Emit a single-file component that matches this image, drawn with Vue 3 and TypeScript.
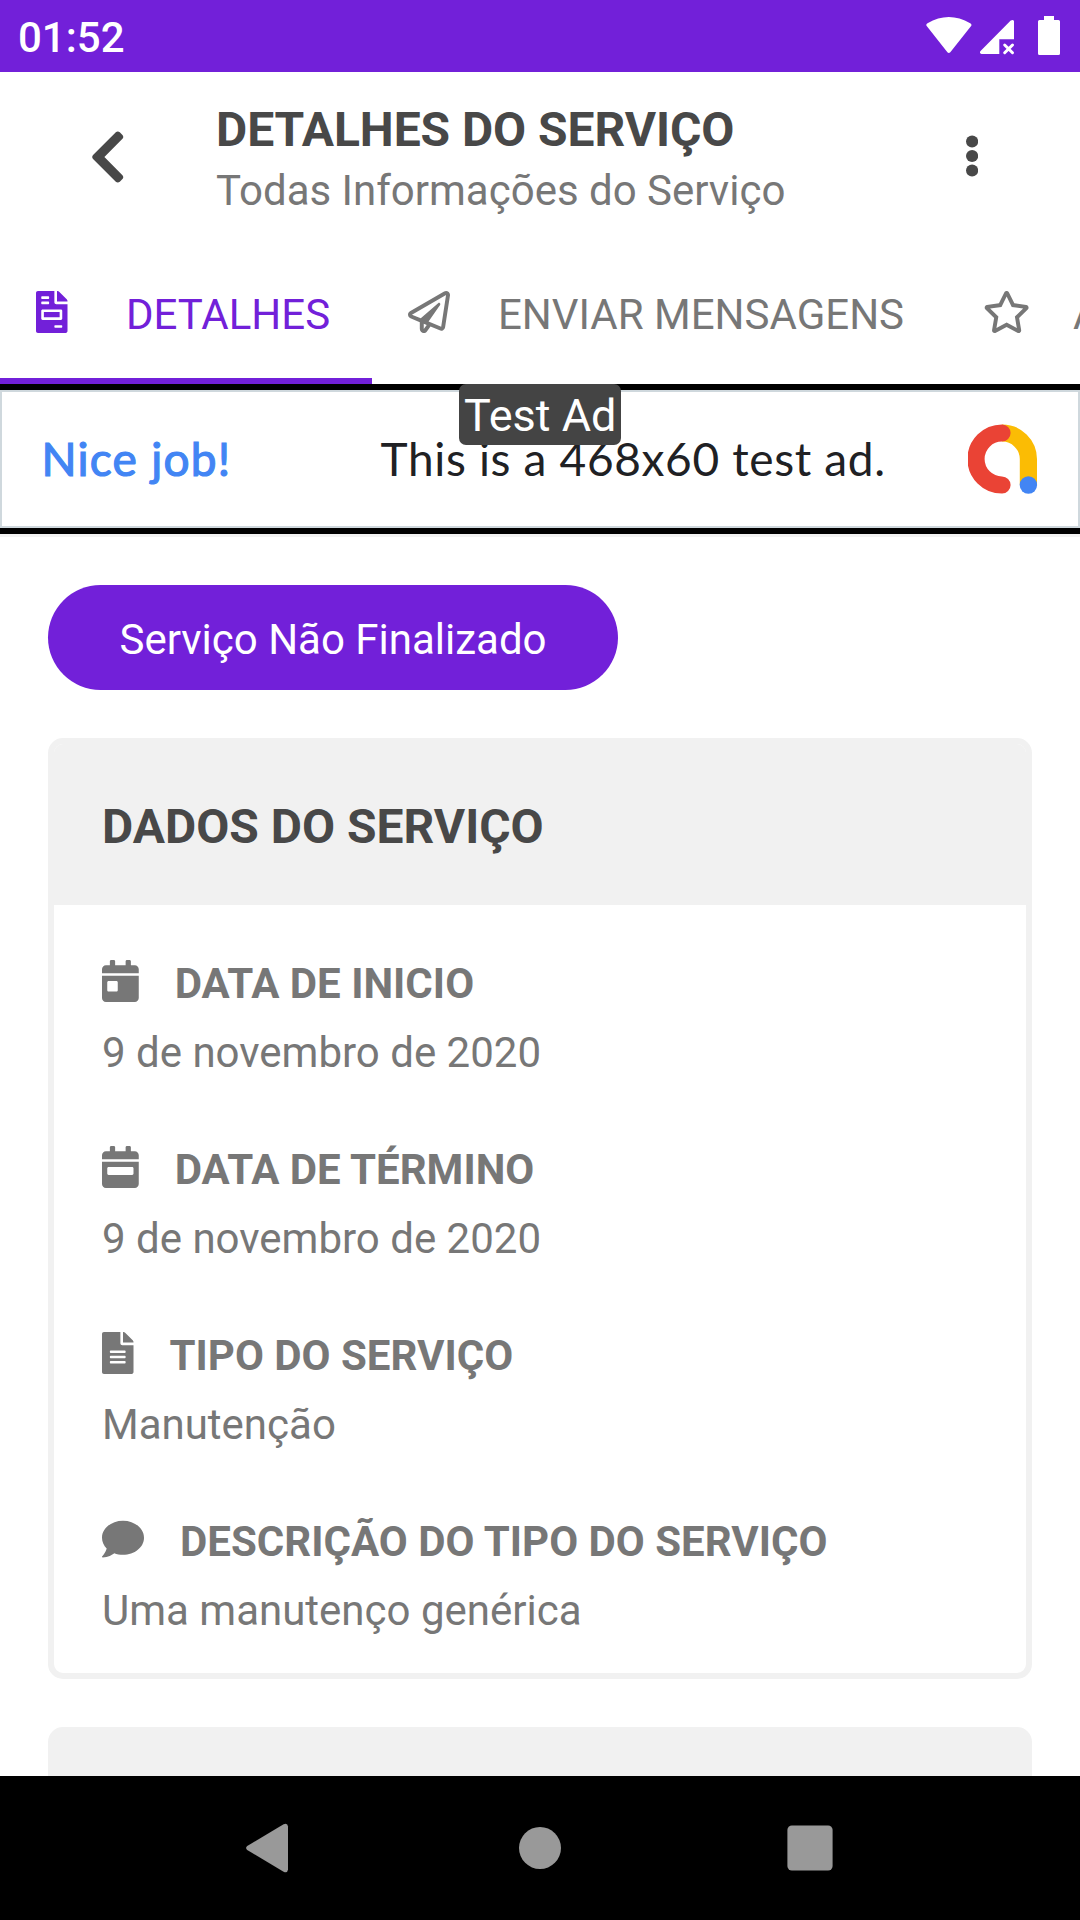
<script setup lang="ts">
interface Field {
  label: string
  value: string
  iconWidth: number
  path: string
}

const calendarTop =
  'M400 64h-48V16c0-8.800-7.200-16-16-16h-32c-8.800 0-16 7.200-16 16v48H160V16c0-8.800-7.200-16-16-16h-32c-8.800 0-16 7.200-16 16v48H48C21.500 64 0 85.500 0 112v48h448v-48c0-26.500-21.500-48-48-48z'

const fields: Field[] = [
  {
    label: 'DATA DE INICIO',
    value: '9 de novembro de 2020',
    iconWidth: 448,
    path:
      'M0 464c0 26.500 21.500 48 48 48h352c26.500 0 48-21.500 48-48V192H0v272zm64-192c0-8.800 7.200-16 16-16h96c8.800 0 16 7.200 16 16v96c0 8.800-7.200 16-16 16H80c-8.800 0-16-7.200-16-16v-96z' +
      calendarTop,
  },
  {
    label: 'DATA DE TÉRMINO',
    value: '9 de novembro de 2020',
    iconWidth: 448,
    path:
      'M0 464c0 26.500 21.500 48 48 48h352c26.500 0 48-21.500 48-48V192H0v272zm64-192c0-8.800 7.200-16 16-16h288c8.800 0 16 7.200 16 16v64c0 8.800-7.200 16-16 16H80c-8.800 0-16-7.200-16-16v-64z' +
      calendarTop,
  },
  {
    label: 'TIPO DO SERVIÇO',
    value: 'Manutenção',
    iconWidth: 384,
    path: 'M224 136V0H24C10.700 0 0 10.700 0 24v464c0 13.300 10.700 24 24 24h336c13.300 0 24-10.700 24-24V160H248c-13.200 0-24-10.800-24-24zm64 236c0 6.600-5.400 12-12 12H108c-6.600 0-12-5.400-12-12v-8c0-6.600 5.400-12 12-12h168c6.600 0 12 5.400 12 12v8zm0-64c0 6.600-5.400 12-12 12H108c-6.600 0-12-5.400-12-12v-8c0-6.600 5.400-12 12-12h168c6.600 0 12 5.400 12 12v8zm0-72v8c0 6.600-5.400 12-12 12H108c-6.600 0-12-5.400-12-12v-8c0-6.600 5.400-12 12-12h168c6.600 0 12 5.400 12 12zm96-114.100v6.100H256V0h6.100c6.400 0 12.500 2.500 17 7l97.900 98c4.500 4.500 7 10.600 7 16.900z',
  },
  {
    label: 'DESCRIÇÃO DO TIPO DO SERVIÇO',
    value: 'Uma manutenço genérica',
    iconWidth: 512,
    path: 'M256 32C114.600 32 0 125.100 0 240c0 49.600 21.400 95 57 130.700C44.500 421.100 2.700 466 2.200 466.500c-2.200 2.300-2.800 5.700-1.500 8.700S4.800 480 8 480c66.300 0 116-31.800 140.600-51.400 32.700 12.300 69 19.400 107.400 19.400 141.400 0 256-93.100 256-208S397.400 32 256 32z',
  },
]
</script>

<template>
  <div class="screen">
    <div class="status">
      <span class="clock">01:52</span>
      <svg class="status-icons" width="140" height="44" viewBox="924 14 140 44" fill="#fff">
        <path d="M927.100 26.600Q925.300 24.600 927.500 23.200Q948.800 10.800 970.200 23.200Q972.500 24.600 970.700 26.600L950.300 52.200Q948.800 53.800 947.400 52.200Z" />
        <path d="M1014 21.200V39.300H999.300V54H981.500Q979.200 53.200 980.300 51.200L1010.700 20.600Q1013.400 19.100 1014 21.200Z" />
        <path d="M1004.700 45L1012.500 52.700M1012.500 45L1004.700 52.700" stroke="#fff" stroke-width="3" stroke-linecap="round" />
        <path d="M1044 16h10v4h4.500q1.500 0 1.500 1.500v32q0 1.500-1.500 1.500h-19q-1.500 0-1.500-1.500v-32q0-1.500 1.500-1.500h4.500z" />
      </svg>
    </div>

    <header class="header">
      <svg class="back" width="37.500" height="60" viewBox="0 0 320 512" fill="currentColor">
        <path d="M34.520 239.030L228.870 44.690c9.370-9.370 24.570-9.370 33.940 0l22.670 22.670c9.360 9.360 9.370 24.520.04 33.900L131.490 256l154.020 154.750c9.340 9.380 9.320 24.540-.04 33.900l-22.670 22.670c-9.370 9.370-24.570 9.370-33.940 0L34.520 272.970c-9.370-9.370-9.370-24.570 0-33.940z" />
      </svg>
      <div class="titles">
        <h1>DETALHES DO SERVIÇO</h1>
        <p>Todas Informações do Serviço</p>
      </div>
      <svg class="more" width="12.200" height="42" viewBox="-.1 0 12.200 42" fill="currentColor">
        <circle cx="6" cy="6.500" r="6.100" />
        <circle cx="6" cy="21" r="6.100" />
        <circle cx="6" cy="35.500" r="6.100" />
      </svg>
    </header>

    <nav class="tabs">
      <div class="tab active">
        <span class="tab-icon">
          <svg width="31.500" height="42" viewBox="0 0 384 512" fill="currentColor">
            <path d="M288 256H96v64h192v-64zm89-151L279.100 7c-4.500-4.500-10.600-7-17-7H256v128h128v-6.100c0-6.300-2.500-12.400-7-16.900zm-153 31V0H24C10.700 0 0 10.700 0 24v464c0 13.300 10.700 24 24 24h336c13.300 0 24-10.700 24-24V160H248c-13.200 0-24-10.800-24-24zM64 72c0-4.420 3.580-8 8-8h80c4.420 0 8 3.580 8 8v16c0 4.420-3.580 8-8 8H72c-4.420 0-8-3.580-8-8V72zm0 64c0-4.420 3.580-8 8-8h80c4.420 0 8 3.580 8 8v16c0 4.420-3.580 8-8 8H72c-4.420 0-8-3.580-8-8v-16zm256 304c0 4.420-3.580 8-8 8h-80c-4.420 0-8-3.580-8-8v-16c0-4.420 3.580-8 8-8h80c4.420 0 8 3.580 8 8v16zm0-200v96c0 8.840-7.160 16-16 16H80c-8.840 0-16-7.160-16-16v-96c0-8.840 7.160-16 16-16h224c8.840 0 16 7.160 16 16z" />
          </svg>
        </span>
        <span>DETALHES</span>
      </div>
      <div class="tab messages">
        <span class="tab-icon">
          <svg width="42" height="42" viewBox="0 0 512 512" fill="currentColor">
            <path d="M440 6.500L24 246.400c-34.400 19.900-31.100 70.800 5.700 85.900L144 379.600V464c0 46.400 59.200 65.500 86.600 28.600l43.800-59.100 111.900 46.200c5.900 2.400 12.100 3.600 18.300 3.600 8.200 0 16.300-2.100 23.600-6.200 12.800-7.200 21.600-20 23.900-34.500l59.400-387.200c6.100-40.100-36.900-68.800-71.500-48.900zM192 464v-64.600l36.600 15.100L192 464zm212.600-28.700l-153.800-63.500L391 169.500c10.700-15.500-9.500-33.500-23.700-21.200L155.800 332.600 48 288 464 48l-59.400 387.300z" />
          </svg>
        </span>
        <span>ENVIAR MENSAGENS</span>
      </div>
      <div class="tab">
        <span class="tab-icon">
          <svg width="47.250" height="42" viewBox="0 0 576 512" fill="currentColor">
            <path d="M528.100 171.500L382 150.200 316.700 17.800c-11.700-23.600-45.600-23.900-57.400 0L194 150.200 47.900 171.500c-26.200 3.800-36.700 36.100-17.700 54.600l105.700 103-25 145.500c-4.500 26.300 23.200 46 46.400 33.700L288 439.600l130.700 68.700c23.200 12.200 50.900-7.400 46.400-33.700l-25-145.500 105.700-103c19-18.500 8.500-50.800-17.700-54.600zM388.600 312.300l23.700 138.400L288 385.400l-124.300 65.300 23.700-138.400-100.600-98 139-20.200 62.200-126 62.200 126 139 20.200-100.600 98z" />
          </svg>
        </span>
        <span>A</span>
      </div>
    </nav>

    <section class="ad">
      <div class="ad-box">
        <span class="ad-lead">Nice job!</span>
        <span class="ad-text">This is a 468x60 test ad.</span>
        <svg class="ad-logo" width="70" height="70" viewBox="967 424 70 70" fill="none" stroke-width="17.200">
          <path d="M1001 433A26.300 26.300 0 0 1 1027.400 459V485" stroke="#fbbc04" />
          <path d="M1001 433A26 26 0 0 0 1001 485" stroke="#ea4335" stroke-linecap="round" />
          <circle cx="1027.400" cy="485" r="8.700" fill="#4285f4" />
        </svg>
      </div>
      <span class="ad-badge">Test Ad</span>
    </section>

    <main class="content">
      <button class="pill">Serviço Não Finalizado</button>
      <section class="card">
        <h2>DADOS DO SERVIÇO</h2>
        <div class="card-body">
          <div v-for="f in fields" :key="f.label" class="field">
            <div class="label">
              <svg :width="(f.iconWidth * 42) / 512" height="42" :viewBox="`0 0 ${f.iconWidth} 512`" fill="currentColor">
                <path :d="f.path" />
              </svg>
              <span>{{ f.label }}</span>
            </div>
            <div class="value">{{ f.value }}</div>
          </div>
        </div>
      </section>
      <section class="card next"></section>
    </main>

    <footer class="navbar">
      <svg width="48" height="52" viewBox="243 1822 48 52" fill="#999">
        <path d="M247.200 1846L283.600 1824.300Q287.500 1822.600 288 1826.500V1869.500Q287.500 1873.400 283.600 1871.700L247.200 1850Q245 1848 247.200 1846Z" />
      </svg>
      <svg class="home" width="42" height="42" viewBox="0 0 42 42" fill="#999"><circle cx="21" cy="21" r="21" /></svg>
      <svg width="46" height="46" viewBox="0 0 46 46" fill="#999"><rect x=".4" y=".4" width="45.200" height="45.200" rx="4.500" /></svg>
    </footer>
  </div>
</template>

<style>
body {
  margin: 0;
  background: #fff;
}
</style>

<style scoped>
.screen {
  width: 1080px;
  height: 1920px;
  overflow: hidden;
  display: flex;
  flex-direction: column;
  background: #fff;
  color: #777;
  font-family: Roboto, "Liberation Sans", sans-serif;
  font-size: 42px;
  line-height: 50px;
  white-space: nowrap;
}
svg {
  display: block;
  flex: none;
}
.status {
  flex: none;
  box-sizing: border-box;
  height: 72px;
  padding: 0 16px 0 18px;
  display: flex;
  justify-content: space-between;
  background: #7220d9;
  color: #fff;
}
.clock {
  font-weight: 500;
  margin-top: 13px;
}
.status-icons {
  margin-top: 14px;
}
.header {
  flex: none;
  box-sizing: border-box;
  height: 184px;
  padding: 0 102px 0 89px;
  display: flex;
  align-items: flex-start;
  color: #484848;
}
.back {
  margin-top: 54.500px;
}
.titles {
  flex: 1;
  margin: 30px 0 0 89.500px;
}
h1,
h2,
p {
  margin: 0;
}
h1 {
  font-size: 48px;
  line-height: 56px;
  letter-spacing: -0.06px;
}
p {
  margin-top: 8px;
  color: #777;
}
.more {
  margin-top: 63px;
}
.tabs {
  flex: none;
  height: 128px;
  display: flex;
  overflow: hidden;
}
.tab {
  flex: none;
  box-sizing: border-box;
  height: 128px;
  padding: 34px 36px 0;
  display: flex;
  align-items: flex-start;
}
.active {
  width: 372px;
  color: #7220d9;
  border-bottom: 6px solid #7220d9;
}
.messages {
  width: 575px;
}
.tab-icon {
  flex: none;
  width: 42px;
  margin: 1px 48px 0 0;
}
.ad {
  flex: none;
  position: relative;
  height: 138px;
  border: solid #000;
  border-width: 6px 0;
}
.ad-box {
  box-sizing: border-box;
  height: 138px;
  padding: 0 40.500px 0 39.500px;
  border: 2.500px solid #cfd8dd;
  display: flex;
  align-items: center;
  background: #fff;
}
.ad-lead,
.ad-text {
  font-family: Lato, Roboto, sans-serif;
  font-size: 46px;
  line-height: 56px;
}
.ad-lead {
  width: 339px;
  color: #4285f4;
  letter-spacing: 1.250px;
  -webkit-text-stroke: 1.200px #4285f4;
}
.ad-text {
  flex: 1;
  color: #202124;
  letter-spacing: 0.650px;
}
.ad-badge {
  position: absolute;
  left: 459px;
  top: -6px;
  box-sizing: border-box;
  width: 162px;
  height: 61px;
  padding: 6px 0 0 5px;
  border-radius: 7px;
  background: #444;
  color: #fff;
  font-size: 45px;
  line-height: 52px;
}
.content {
  flex: 1;
  min-height: 0;
  overflow: hidden;
  padding: 48px 48px 0;
  border-top: 3px solid #f2f2f2;
}
.pill {
  display: block;
  width: 570px;
  height: 105px;
  padding: 5px 0 0;
  border: 0;
  border-radius: 53px;
  background: #7220d9;
  color: #fff;
  font: inherit;
}
.card {
  box-sizing: border-box;
  margin-top: 48px;
  height: 941px;
  border: 6px solid #f1f1f1;
  border-radius: 15px;
  overflow: hidden;
}
.next {
  background: #f1f1f1;
}
h2 {
  box-sizing: border-box;
  height: 161px;
  padding: 55px 48px 0;
  background: #f1f1f1;
  color: #484848;
  font-size: 48px;
  line-height: 56px;
}
.card-body {
  padding: 54px 48px 0;
}
.field {
  height: 186px;
}
.label {
  display: flex;
  align-items: flex-start;
  gap: 36px;
  font-weight: 700;
}
.label svg {
  margin-top: 1px;
}
.value {
  margin-top: 19px;
}
.navbar {
  flex: none;
  box-sizing: border-box;
  height: 144px;
  padding: 0 247px 0 243px;
  display: flex;
  align-items: center;
  justify-content: space-between;
  background: #000;
}
.home {
  margin-left: 2px;
}
</style>
